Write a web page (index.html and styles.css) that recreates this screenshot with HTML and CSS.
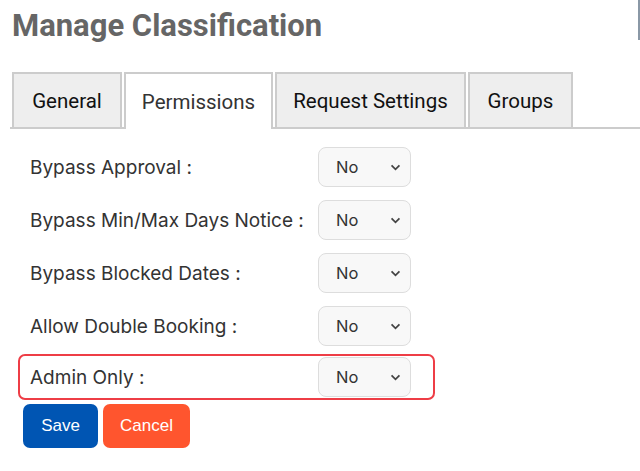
FILE: index.html
```html
<!DOCTYPE html>
<html>
<head>
<meta charset="utf-8">
<link rel="stylesheet" href="styles.css">
</head>
<body>
<div class="page">
  <h1 class="title">Manage Classification</h1>
  <div class="tabs">
    <div class="tab">General</div>
    <div class="tab active">Permissions</div>
    <div class="tab">Request Settings</div>
    <div class="tab">Groups</div>
  </div>
  <div class="form">
    <div class="row">
      <label class="label">Bypass Approval :</label>
      <div class="select"><span>No</span><svg class="chev" viewBox="0 0 12 8" width="11" height="7"><path d="M1.5 1.5 L6 6 L10.5 1.5" fill="none" stroke="#444" stroke-width="2"/></svg></div>
    </div>
    <div class="row">
      <label class="label">Bypass Min/Max Days Notice :</label>
      <div class="select"><span>No</span><svg class="chev" viewBox="0 0 12 8" width="11" height="7"><path d="M1.5 1.5 L6 6 L10.5 1.5" fill="none" stroke="#444" stroke-width="2"/></svg></div>
    </div>
    <div class="row">
      <label class="label">Bypass Blocked Dates :</label>
      <div class="select"><span>No</span><svg class="chev" viewBox="0 0 12 8" width="11" height="7"><path d="M1.5 1.5 L6 6 L10.5 1.5" fill="none" stroke="#444" stroke-width="2"/></svg></div>
    </div>
    <div class="row">
      <label class="label">Allow Double Booking :</label>
      <div class="select"><span>No</span><svg class="chev" viewBox="0 0 12 8" width="11" height="7"><path d="M1.5 1.5 L6 6 L10.5 1.5" fill="none" stroke="#444" stroke-width="2"/></svg></div>
    </div>
    <div class="row highlight">
      <label class="label">Admin Only :</label>
      <div class="select"><span>No</span><svg class="chev" viewBox="0 0 12 8" width="11" height="7"><path d="M1.5 1.5 L6 6 L10.5 1.5" fill="none" stroke="#444" stroke-width="2"/></svg></div>
    </div>
    <div class="buttons">
      <button class="btn save">Save</button>
      <button class="btn cancel">Cancel</button>
    </div>
  </div>
</div>
<div class="edge"></div>
</body>
</html>
```
FILE: styles.css
```css
html, body {
  margin: 0;
  padding: 0;
  background: #fff;
}
body {
  width: 640px;
  height: 471px;
  overflow: hidden;
  position: relative;
}
.page {
  padding: 0 0 0 10px;
}
.title {
  margin: 0;
  padding: 6px 0 0 2px;
  font-family: Roboto, "Liberation Sans", sans-serif;
  font-weight: 700;
  font-size: 31px;
  line-height: 40px;
  color: #666;
  height: 72px;
  box-sizing: border-box;
}
.tabs {
  display: flex;
  gap: 2px;
  padding-left: 2px;
  border-bottom: 2px solid #ccc;
  height: 55px;
  box-sizing: content-box;
}
.tab {
  box-sizing: border-box;
  height: 55px;
  border: 2px solid #ccc;
  border-bottom: none;
  background: #eee;
  font-family: Roboto, "Liberation Sans", sans-serif;
  font-size: 20.5px;
  color: #111;
  display: flex;
  align-items: center;
  justify-content: center;
  padding-top: 1px;
}
.tab:nth-child(1) { width: 110px; }
.tab:nth-child(2) { width: 149px; }
.tab:nth-child(3) { width: 191px; }
.tab:nth-child(4) { width: 105px; }
.tab.active {
  background: #fff;
  color: #333;
  height: 57px;
  margin-bottom: -2px;
}
.form {
  padding: 18px 0 0 8px;
  display: flex;
  flex-direction: column;
  gap: 13px;
}
.row {
  display: flex;
  align-items: center;
  width: 417px;
  box-sizing: border-box;
  padding: 0 0 0 12px;
  height: 40px;
}
.label {
  font-family: Inter, "Liberation Sans", sans-serif;
  font-size: 19px;
  color: #333;
  width: 288px;
}
.select {
  width: 93px;
  height: 40px;
  box-sizing: border-box;
  border: 1px solid #ddd;
  border-radius: 8px;
  background: #f8f8f8;
  display: flex;
  align-items: center;
  justify-content: space-between;
  padding: 0 9px 0 17px;
  font-family: Inter, "Liberation Sans", sans-serif;
  font-size: 16.5px;
  color: #333;
}
.row.highlight {
  border: 2px solid #ee3d46;
  border-radius: 7px;
  height: 46px;
  margin: -5px 0 0 0;
  padding-left: 10px;
}
.buttons {
  display: flex;
  gap: 5px;
  margin: -9px 0 0 5px;
}
.btn {
  height: 44px;
  border: none;
  border-radius: 7px;
  color: #fff;
  font-family: "Liberation Sans", Arial, sans-serif;
  font-size: 17px;
  padding: 0;
}
.save { width: 75px; background: #0055b3; }
.cancel { width: 87px; background: #ff552e; }
.edge {
  position: absolute;
  right: 0;
  top: 0;
  width: 2px;
  height: 40px;
  background: #8a98a6;
}
```
